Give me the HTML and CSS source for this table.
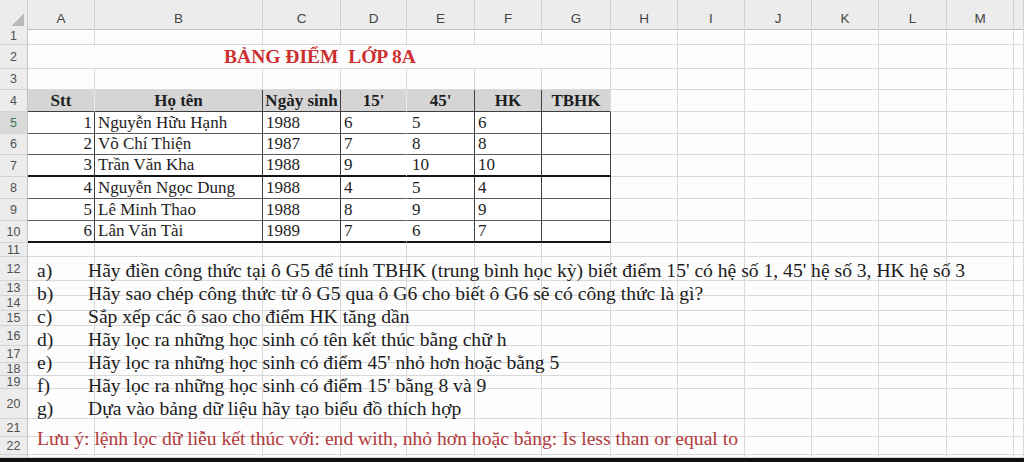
FILE: index.html
```html
<!DOCTYPE html>
<html lang="vi">
<head>
<meta charset="utf-8">
<title>Bảng điểm lớp 8A</title>
<link rel="stylesheet" href="styles.css">
</head>
<body>
<div class="sheet">
  <div class="row colheads">
    <div class="corner"></div>
    <div>A</div><div>B</div><div>C</div><div>D</div><div>E</div><div>F</div><div>G</div><div>H</div><div>I</div><div>J</div><div>K</div><div>L</div><div>M</div><div></div>
  </div>
  <div class="row h18"><div class="rh">1</div><div></div><div></div><div></div><div></div><div></div><div></div><div></div><div></div><div></div><div></div><div></div><div></div><div></div><div></div></div>
  <div class="row h24"><div class="rh">2</div><div class="title">BẢNG ĐIỂM&nbsp; LỚP 8A</div><div></div><div></div><div></div><div></div><div></div><div></div><div></div></div>
  <div class="row h21"><div class="rh">3</div><div></div><div></div><div></div><div></div><div></div><div></div><div></div><div></div><div></div><div></div><div></div><div></div><div></div><div></div></div>
  <div class="row h22">
    <div class="rh">4</div>
    <div class="th soft">Stt</div><div class="th">Họ tên</div><div class="th">Ngày sinh</div><div class="th soft">15'</div><div class="th">45'</div><div class="th">HK</div><div class="th gl">TBHK</div>
    <div></div><div></div><div></div><div></div><div></div><div></div><div></div>
  </div>
  <div class="row h22">
    <div class="rh active">5</div>
    <div class="t num">1</div><div class="t txt">Nguyễn Hữu Hạnh</div><div class="t txt">1988</div><div class="t txt nr">6</div><div class="t txt e">5</div><div class="t txt">6</div><div class="t"></div>
    <div></div><div></div><div></div><div></div><div></div><div></div><div></div>
  </div>
  <div class="row h21">
    <div class="rh">6</div>
    <div class="t num">2</div><div class="t txt">Võ Chí Thiện</div><div class="t txt">1987</div><div class="t txt nr">7</div><div class="t txt e">8</div><div class="t txt">8</div><div class="t"></div>
    <div></div><div></div><div></div><div></div><div></div><div></div><div></div>
  </div>
  <div class="row h22">
    <div class="rh">7</div>
    <div class="t thick num">3</div><div class="t thick txt">Trần Văn Kha</div><div class="t thick txt">1988</div><div class="t thick txt nr">9</div><div class="t thick txt e">10</div><div class="t thick txt">10</div><div class="t thick"></div>
    <div></div><div></div><div></div><div></div><div></div><div></div><div></div>
  </div>
  <div class="row h22">
    <div class="rh">8</div>
    <div class="t num">4</div><div class="t txt">Nguyễn Ngọc Dung</div><div class="t txt">1988</div><div class="t txt nr">4</div><div class="t txt e">5</div><div class="t txt">4</div><div class="t"></div>
    <div></div><div></div><div></div><div></div><div></div><div></div><div></div>
  </div>
  <div class="row h22">
    <div class="rh">9</div>
    <div class="t num">5</div><div class="t txt">Lê Minh Thao</div><div class="t txt">1988</div><div class="t txt nr">8</div><div class="t txt e">9</div><div class="t txt">9</div><div class="t"></div>
    <div></div><div></div><div></div><div></div><div></div><div></div><div></div>
  </div>
  <div class="row h22">
    <div class="rh">10</div>
    <div class="t thick num">6</div><div class="t thick txt">Lân Văn Tài</div><div class="t thick txt">1989</div><div class="t thick txt nr">7</div><div class="t thick txt e">6</div><div class="t thick txt">7</div><div class="t thick"></div>
    <div></div><div></div><div></div><div></div><div></div><div></div><div></div>
  </div>
  <div class="row h14"><div class="rh">11</div><div></div><div></div><div></div><div></div><div></div><div></div><div></div><div></div><div></div><div></div><div></div><div></div><div></div><div></div></div>
  <div class="row h24"><div class="rh">12</div><div></div><div></div><div></div><div></div><div></div><div></div><div></div><div></div><div></div><div></div><div></div><div></div><div></div><div></div></div>
  <div class="row h15"><div class="rh">13</div><div></div><div></div><div></div><div></div><div></div><div></div><div></div><div></div><div></div><div></div><div></div><div></div><div></div><div></div></div>
  <div class="row h15"><div class="rh">14</div><div></div><div></div><div></div><div></div><div></div><div></div><div></div><div></div><div></div><div></div><div></div><div></div><div></div><div></div></div>
  <div class="row h15"><div class="rh">15</div><div></div><div></div><div></div><div></div><div></div><div></div><div></div><div></div><div></div><div></div><div></div><div></div><div></div><div></div></div>
  <div class="row h20"><div class="rh">16</div><div></div><div></div><div></div><div></div><div></div><div></div><div></div><div></div><div></div><div></div><div></div><div></div><div></div><div></div></div>
  <div class="row h17"><div class="rh">17</div><div></div><div></div><div></div><div></div><div></div><div></div><div></div><div></div><div></div><div></div><div></div><div></div><div></div><div></div></div>
  <div class="row h13"><div class="rh">18</div><div></div><div></div><div></div><div></div><div></div><div></div><div></div><div></div><div></div><div></div><div></div><div></div><div></div><div></div></div>
  <div class="row h13"><div class="rh">19</div><div></div><div></div><div></div><div></div><div></div><div></div><div></div><div></div><div></div><div></div><div></div><div></div><div></div><div></div></div>
  <div class="row h30"><div class="rh">20</div><div></div><div></div><div></div><div></div><div></div><div></div><div></div><div></div><div></div><div></div><div></div><div></div><div></div><div></div></div>
  <div class="row h18"><div class="rh">21</div><div></div><div></div><div></div><div></div><div></div><div></div><div></div><div></div><div></div><div></div><div></div><div></div><div></div><div></div></div>
  <div class="row h18"><div class="rh">22</div><div></div><div></div><div></div><div></div><div></div><div></div><div></div><div></div><div></div><div></div><div></div><div></div><div></div><div></div></div>
  <div class="row h3"><div class="rh"></div><div></div><div></div><div></div><div></div><div></div><div></div><div></div><div></div><div></div><div></div><div></div><div></div><div></div><div></div></div>

  <div class="textbox">
    <p class="item"><span class="lbl">a)</span><span>Hãy điền công thức tại ô G5 để tính TBHK (trung bình học kỳ) biết điểm 15' có hệ số 1, 45' hệ số 3, HK hệ số 3</span></p>
    <p class="item"><span class="lbl">b)</span><span>Hãy sao chép công thức từ ô G5 qua ô G6 cho biết ô G6 sẽ có công thức là gì?</span></p>
    <p class="item"><span class="lbl">c)</span><span>Sắp xếp các ô sao cho điểm HK tăng dần</span></p>
    <p class="item"><span class="lbl">d)</span><span>Hãy lọc ra những học sinh có tên kết thúc bằng chữ h</span></p>
    <p class="item"><span class="lbl">e)</span><span>Hãy lọc ra những học sinh có điểm 45' nhỏ hơn hoặc bằng 5</span></p>
    <p class="item"><span class="lbl">f)</span><span>Hãy lọc ra những học sinh có điểm 15' bằng 8 và 9</span></p>
    <p class="item"><span class="lbl">g)</span><span>Dựa vào bảng dữ liệu hãy tạo biểu đồ thích hợp</span></p>
    <p class="warn">Lưu ý: lệnh lọc dữ liễu kết thúc với: end with, nhỏ hơn hoặc bằng: Is less than or equal to</p>
  </div>
</div>
<div class="edge"></div>
</body>
</html>
```

FILE: styles.css
```css
* {
  box-sizing: border-box;
  margin: 0;
  padding: 0;
}

html,
body {
  width: 1024px;
  height: 462px;
  overflow: hidden;
  background: #fdfdfd;
}

body {
  font-family: "Liberation Serif", "Times New Roman", serif;
  color: #1e1e1e;
}

.sheet {
  position: relative;
  height: 458px;
  overflow: hidden;
}

.row {
  display: grid;
  grid-template-columns: 28px 67px 168px 78px 66px 68px 67px 69px 67px 67px 67px 67px 68px 67px 1fr;
}

.row > div {
  display: flex;
  align-items: flex-end;
  white-space: nowrap;
  border-right: 1px solid #d9d9d9;
  border-bottom: 1px solid #d9d9d9;
  font-size: 17px;
  line-height: 20px;
  overflow: visible;
}

.h3 { height: 3px; }
.h13 { height: 13px; }
.h14 { height: 14px; }
.h15 { height: 15px; }
.h17 { height: 17px; }
.h18 { height: 18px; }
.h20 { height: 20px; }
.h21 { height: 21px; }
.h22 { height: 22px; }
.h24 { height: 24px; }
.h30 { height: 30px; }

/* column headers */
.colheads {
  height: 27px;
}

.colheads > div {
  background: #ececec;
  border-right-color: #cfcfcf;
  border-bottom-color: #bfbfbf;
  justify-content: center;
  align-items: center;
  padding-top: 9px;
  font-family: "Liberation Sans", Arial, sans-serif;
  font-size: 13.5px;
  color: #454545;
}

.colheads > .corner {
  background:
    linear-gradient(135deg, transparent 50%, #b9b9b9 50%) no-repeat right 3px bottom 3px / 13px 13px,
    #ececec;
}

/* row headers */
.row > .rh {
  background: #ececec;
  border-right-color: #c2c2c2;
  border-bottom-color: #d3d3d3;
  justify-content: center;
  align-items: center;
  font-family: "Liberation Sans", Arial, sans-serif;
  font-size: 12.5px;
  line-height: 12px;
  color: #505050;
}

.row > .rh.active {
  background: #d9d9d9;
  color: #3b7650;
}

/* title (merged A2:G2) */
.row > .title {
  grid-column: span 7;
  justify-content: center;
  align-items: center;
  padding-left: 2px;
  font-weight: bold;
  font-size: 19.5px;
  color: #cc3030;
}

/* table header */
.row > .th {
  background: #d5d5d5;
  border-right-color: #3e3e3e;
  border-bottom-color: #3e3e3e;
  justify-content: center;
  font-weight: bold;
}

.row > .th.soft {
  border-right-color: #e9e9e9;
}

.row > .th.gl {
  border-right-color: #d9d9d9;
}

/* table data */
.row > .t {
  background: #fff;
  border-right-color: #3e3e3e;
  border-bottom-color: #5a5a5a;
}

.row > .t.nr {
  border-right-color: #fff;
}

.row > .t.thick {
  border-bottom: 2px solid #141414;
}

.row > .num {
  justify-content: flex-end;
  padding-right: 2px;
}

.row > .txt {
  padding-left: 3px;
}

.row > .e {
  padding-left: 5px;
}

/* floating text box with the exercise list */
.textbox {
  position: absolute;
  left: 37px;
  top: 259px;
  font-size: 19.6px;
  line-height: 23px;
  color: #1c1c1c;
  white-space: nowrap;
}

.item {
  display: flex;
}

.item .lbl {
  width: 51px;
  flex: none;
}

.warn {
  margin-top: 7px;
  color: #b23a3c;
}

.edge {
  height: 4px;
  background: #111;
}
```
